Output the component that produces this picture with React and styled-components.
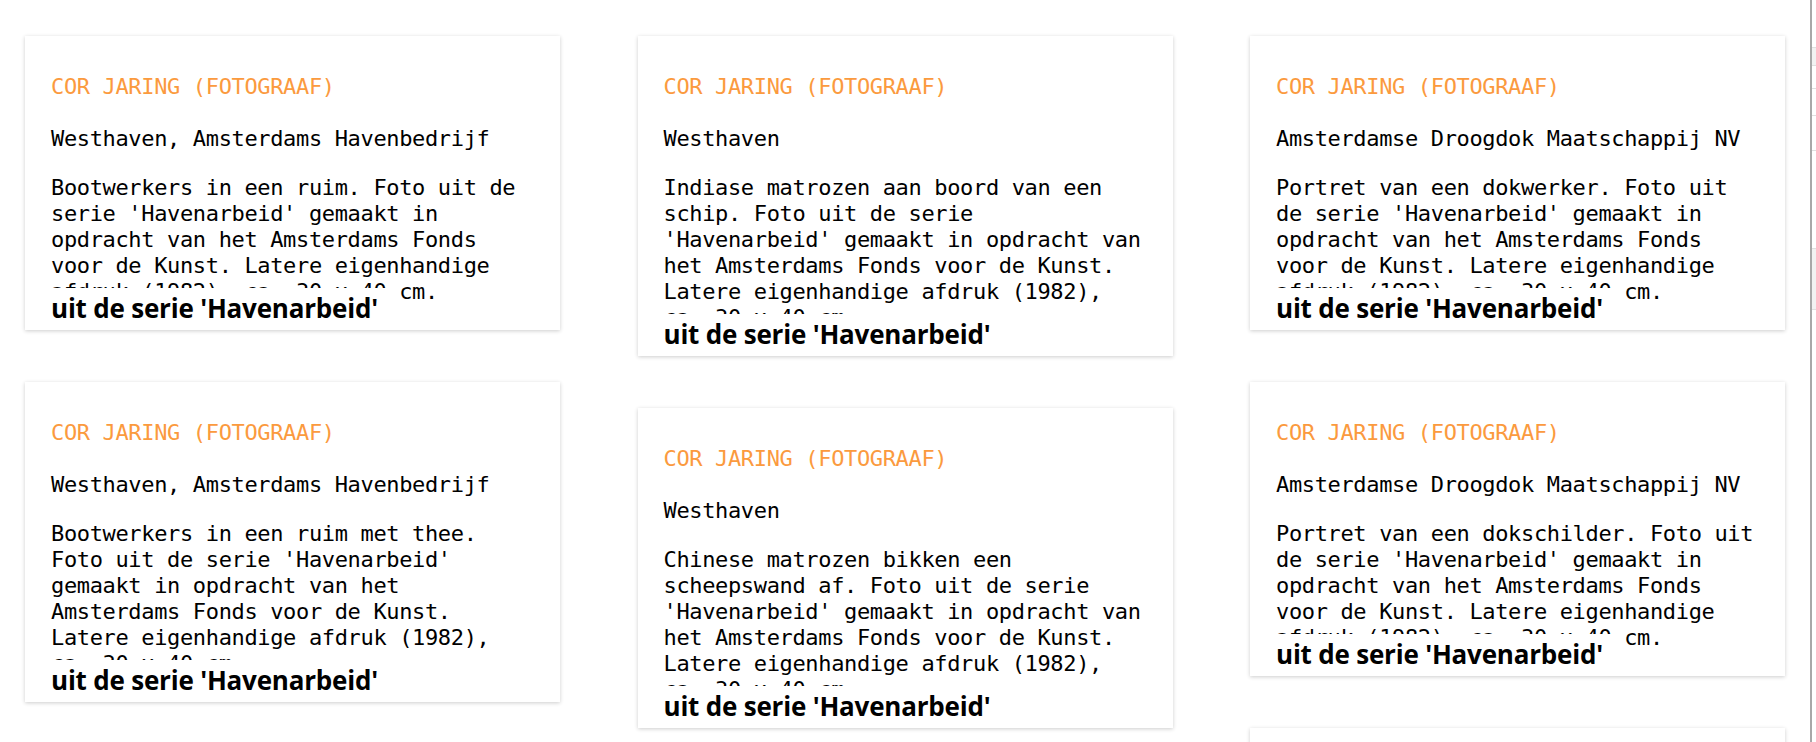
import React from 'react';
import styled, { createGlobalStyle } from 'styled-components';

const GlobalStyle = createGlobalStyle`
  html, body {
    margin: 0;
    padding: 0;
    background: #fff;
    overflow: hidden;
  }
`;

const Page = styled.div`
  display: flex;
  height: 100vh;
  overflow: hidden;
`;

const Main = styled.main`
  flex: 1;
  padding: 36px 0 0 25px;
  overflow: hidden;
`;

const Columns = styled.div`
  display: grid;
  grid-template-columns: repeat(3, 535px);
  column-gap: 77.5px;
  align-items: start;
`;

const Column = styled.div`
  display: flex;
  flex-direction: column;
  gap: 52px;
`;

const Card = styled.article`
  background: #fff;
  box-shadow: 0 1px 4px rgba(0, 0, 0, 0.2);
  padding: 38px 26px 2px;
  font-family: 'DejaVu Sans Mono', 'Liberation Mono', monospace;
  font-size: 22px;
  letter-spacing: -0.35px;
  line-height: 26px;
  color: #000;
`;

const Maker = styled.p`
  margin: 0 0 26px;
  color: #fb9a3e;
  text-transform: uppercase;
`;

const Place = styled.p`
  margin: 0 0 23px;
`;

const Description = styled.p`
  margin: 0;
`;

const Series = styled.div`
  position: relative;
  width: fit-content;
  margin-top: -17px;
  padding-right: 20px;
  background: #fff;
  font-family: 'Open Sans', 'Liberation Sans', sans-serif;
  font-weight: 700;
  font-size: 26px;
  letter-spacing: -0.2px;
  line-height: 40px;
  color: #000;
`;

const Sidebar = styled.aside`
  width: 4px;
  border-left: 2px solid #a8a8a8;
  background: #fff;
  display: flex;
  flex-direction: column;
`;

const SideRow = styled.div`
  height: ${(p) => p.h}px;
  background: ${(p) => (p.shade ? '#f2f2f2' : '#fff')};
  border-bottom: 1px solid #e0e0e0;
`;

const maker = 'Cor Jaring (fotograaf)';
const series = "uit de serie 'Havenarbeid'";
const tail =
  "Foto uit de serie 'Havenarbeid' gemaakt in opdracht van het Amsterdams Fonds voor de Kunst. Latere eigenhandige afdruk (1982), ca. 30 x 40 cm.";

const columns = [
  [
    {
      place: 'Westhaven, Amsterdams Havenbedrijf',
      text: 'Bootwerkers in een ruim. ' + tail,
    },
    {
      place: 'Westhaven, Amsterdams Havenbedrijf',
      text: 'Bootwerkers in een ruim met thee. ' + tail,
    },
  ],
  [
    {
      place: 'Westhaven',
      text: 'Indiase matrozen aan boord van een schip. ' + tail,
    },
    {
      place: 'Westhaven',
      text: 'Chinese matrozen bikken een scheepswand af. ' + tail,
    },
  ],
  [
    {
      place: 'Amsterdamse Droogdok Maatschappij NV',
      text: 'Portret van een dokwerker. ' + tail,
    },
    {
      place: 'Amsterdamse Droogdok Maatschappij NV',
      text: 'Portret van een dokschilder. ' + tail,
    },
    {
      place: 'Amsterdamse Droogdok Maatschappij NV',
      text: 'Portret van een klinker. ' + tail,
    },
  ],
];

const sideRows = [
  { h: 47 },
  { h: 17, shade: true },
  { h: 22 },
  { h: 26 },
  { h: 34 },
  { h: 97 },
  { h: 60, shade: true },
];

export default function App() {
  return (
    <Page>
      <GlobalStyle />
      <Main>
        <Columns>
          {columns.map((col, i) => (
            <Column key={i}>
              {col.map((item, j) => (
                <Card key={j}>
                  <Maker>{maker}</Maker>
                  <Place>{item.place}</Place>
                  <Description>{item.text}</Description>
                  <Series>{series}</Series>
                </Card>
              ))}
            </Column>
          ))}
        </Columns>
      </Main>
      <Sidebar>
        {sideRows.map((r, i) => (
          <SideRow key={i} h={r.h} shade={r.shade} />
        ))}
      </Sidebar>
    </Page>
  );
}
